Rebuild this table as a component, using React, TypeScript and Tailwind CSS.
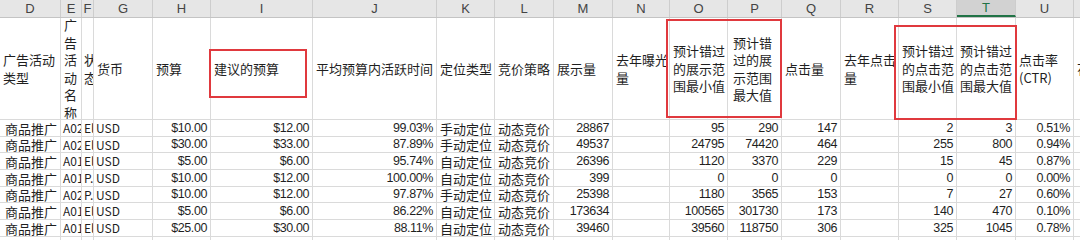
import React from 'react';

type Col = { key: string; w: string; align: 'l' | 'r' | 'x' };

// x = short latin text cell (smaller font, tight padding)
const cols: Col[] = [
  { key: 'D', w: 'w-[61px]', align: 'l' },
  { key: 'E', w: 'w-[21px]', align: 'x' },
  { key: 'F', w: 'w-[12px]', align: 'x' },
  { key: 'G', w: 'w-[59px]', align: 'x' },
  { key: 'H', w: 'w-[58px]', align: 'r' },
  { key: 'I', w: 'w-[102px]', align: 'r' },
  { key: 'J', w: 'w-[124px]', align: 'r' },
  { key: 'K', w: 'w-[58px]', align: 'l' },
  { key: 'L', w: 'w-[59px]', align: 'l' },
  { key: 'M', w: 'w-[59px]', align: 'r' },
  { key: 'N', w: 'w-[57px]', align: 'r' },
  { key: 'O', w: 'w-[58px]', align: 'r' },
  { key: 'P', w: 'w-[54px]', align: 'r' },
  { key: 'Q', w: 'w-[59px]', align: 'r' },
  { key: 'R', w: 'w-[58px]', align: 'r' },
  { key: 'S', w: 'w-[58px]', align: 'r' },
  { key: 'T', w: 'w-[59px]', align: 'r' },
  { key: 'U', w: 'w-[58px]', align: 'r' },
  { key: 'V', w: 'w-[40px]', align: 'l' },
];

const headers = [
  '广告活动类型',
  '广告活动名称',
  '状态',
  '货币',
  '预算',
  '建议的预算',
  '平均预算内活跃时间',
  '定位类型',
  '竞价策略',
  '展示量',
  '去年曝光量',
  '预计错过的展示范围最小值',
  '预计错过的展示范围最大值',
  '点击量',
  '去年点击量',
  '预计错过的点击范围最小值',
  '预计错过的点击范围最大值',
  '点击率(CTR)',
  '花费',
];

const rows: string[][] = [
  ['商品推广', 'A02', 'El', 'USD', '$10.00', '$12.00', '99.03%', '手动定位', '动态竞价', '28867', '', '95', '290', '147', '', '2', '3', '0.51%', ''],
  ['商品推广', 'A02', 'El', 'USD', '$30.00', '$33.00', '87.89%', '手动定位', '动态竞价', '49537', '', '24795', '74420', '464', '', '255', '800', '0.94%', ''],
  ['商品推广', 'A01', 'El', 'USD', '$5.00', '$6.00', '95.74%', '自动定位', '动态竞价', '26396', '', '1120', '3370', '229', '', '15', '45', '0.87%', ''],
  ['商品推广', 'A01', 'P.', 'USD', '$10.00', '$12.00', '100.00%', '自动定位', '动态竞价', '399', '', '0', '0', '0', '', '0', '0', '0.00%', ''],
  ['商品推广', 'A02', 'P.', 'USD', '$10.00', '$12.00', '97.87%', '手动定位', '动态竞价', '25398', '', '1180', '3565', '153', '', '7', '27', '0.60%', ''],
  ['商品推广', 'A01', 'El', 'USD', '$5.00', '$6.00', '86.22%', '自动定位', '动态竞价', '173634', '', '100565', '301730', '173', '', '140', '470', '0.10%', ''],
  ['商品推广', 'A01', 'El', 'USD', '$25.00', '$30.00', '88.11%', '自动定位', '动态竞价', '39460', '', '39560', '118750', '306', '', '325', '1045', '0.78%', ''],
  ['', '', '', '', '', '', '', '', '', '', '', '', '', '', '', '', '', '', ''],
];

const rowHeights = ['h-[17px]', 'h-[16px]', 'h-[17px]', 'h-[17px]', 'h-[16px]', 'h-[17px]', 'h-[17px]', 'h-[17px]'];

const cjk = { fontFamily: '"Noto Sans CJK SC", "Microsoft YaHei", sans-serif' };
const num = { fontFamily: '"Liberation Sans", Arial, sans-serif' };

const App: React.FC = () => {
  return (
    <div className="relative w-[1080px] h-[240px] overflow-hidden bg-white text-[#1f1f1f]" style={cjk}>
      {/* column letters */}
      <div className="flex h-[18px] bg-[#e6e6e6] border-b border-[#c4c4c4]">
        {cols.map((c) => (
          <div
            key={c.key}
            className={`${c.w} shrink-0 flex items-center justify-center border-r border-[#cdcdcd] text-[13px] leading-none ${
              c.key === 'T' ? 'bg-[#d2d2d2] text-[#217346] border-b-2 border-b-[#217346]' : 'text-[#444]'
            }`}
            style={num}
          >
            {c.key}
          </div>
        ))}
      </div>

      {/* header row */}
      <div className="flex h-[102px] border-b border-[#dadada]">
        {cols.map((c, i) => (
          <div
            key={c.key}
            className={`${c.w} shrink-0 flex items-center overflow-hidden border-r border-[#dadada] text-[13px] leading-[17.5px] ${
              c.key === 'P' ? 'pl-[5px] pr-0' : c.key === 'F' ? 'pl-[2px] pr-0' : 'pl-[3px] pr-0'
            }`}
          >
            <span className="block w-full">{headers[i]}</span>
          </div>
        ))}
      </div>

      {/* data rows */}
      {rows.map((r, ri) => (
        <div key={ri} className={`flex ${rowHeights[ri]} border-b border-[#dadada]`}>
          {cols.map((c, ci) => {
            let cls = 'justify-start pl-[3px] text-[13px]';
            if (c.align === 'r') cls = 'justify-end pr-[3px] text-[12.5px] tracking-[-0.4px]';
            if (c.align === 'x') cls = 'justify-start pl-[2px] text-[12px]';
            if (c.key === 'D') cls = 'justify-start pl-[5px] text-[13px]';
            return (
              <div
                key={c.key}
                className={`${c.w} shrink-0 flex items-center overflow-hidden whitespace-nowrap border-r border-[#dadada] leading-none ${cls}`}
                style={c.align === 'r' ? num : cjk}
              >
                {r[ci]}
              </div>
            );
          })}
        </div>
      ))}

      {/* red highlight boxes */}
      <div className="absolute left-[209px] top-[49px] w-[98px] h-[49px] border-2 border-[#e0393e]" />
      <div className="absolute left-[666px] top-[19px] w-[116px] h-[99px] border-2 border-[#e0393e]" />
      <div className="absolute left-[894px] top-[25px] w-[123px] h-[95px] border-2 border-[#e0393e]" />
    </div>
  );
};

export default App;
